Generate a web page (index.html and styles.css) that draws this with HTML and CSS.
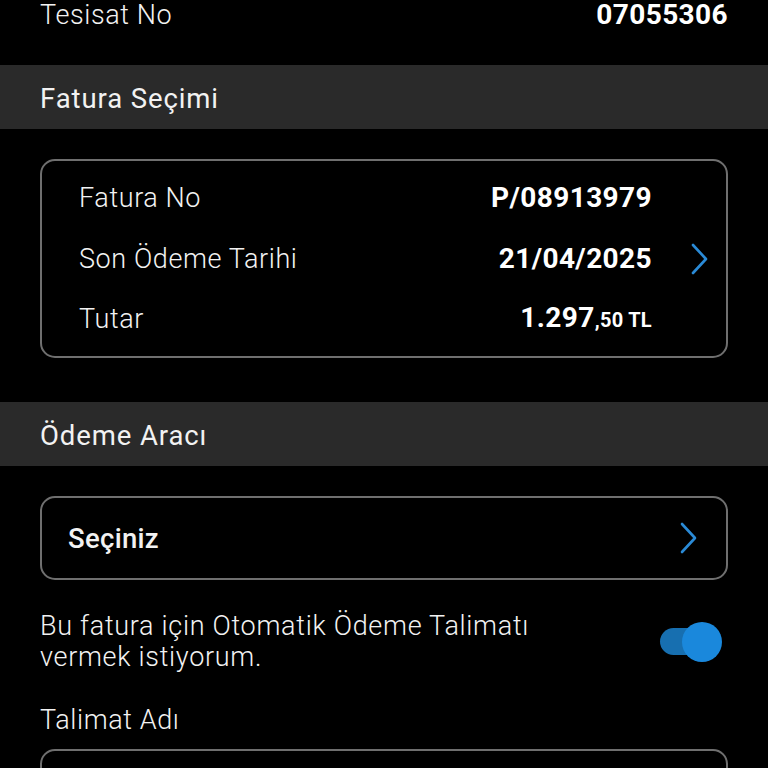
FILE: index.html
```html
<!DOCTYPE html>
<html lang="tr">
<head>
<meta charset="utf-8">
<link rel="stylesheet" href="styles.css">
</head>
<body>
<div class="page">
  <div class="top-row">
    <span class="label">Tesisat No</span>
    <span class="value">07055306</span>
  </div>

  <div class="section-head">Fatura Seçimi</div>

  <div class="card bill">
    <div class="rows">
      <div class="row"><span class="label">Fatura No</span><span class="value">P/08913979</span></div>
      <div class="row"><span class="label">Son Ödeme Tarihi</span><span class="value">21/04/2025</span></div>
      <div class="row"><span class="label">Tutar</span><span class="value">1.297<span class="small">,50 TL</span></span></div>
    </div>
    <div class="chev-col">
      <svg class="chev" viewBox="0 0 18 32" width="18" height="32"><path d="M2 2 L15 16 L2 30" fill="none" stroke="#2a8ad6" stroke-width="2.6" stroke-linecap="round" stroke-linejoin="round"/></svg>
    </div>
  </div>

  <div class="section-head second">Ödeme Aracı</div>

  <div class="card select">
    <span class="select-text">Seçiniz</span>
    <svg class="chev" viewBox="0 0 18 32" width="18" height="32"><path d="M2 2 L15 16 L2 30" fill="none" stroke="#2a8ad6" stroke-width="2.6" stroke-linecap="round" stroke-linejoin="round"/></svg>
  </div>

  <div class="toggle-row">
    <p class="toggle-text">Bu fatura için Otomatik Ödeme Talimatı<br>vermek istiyorum.</p>
    <div class="toggle"><div class="track"></div><div class="thumb"></div></div>
  </div>

  <div class="field-label">Talimat Adı</div>
  <div class="card input"></div>
</div>
</body>
</html>
```

FILE: styles.css
```css
html, body {
  margin: 0;
  padding: 0;
  background: #000;
}
body {
  font-family: Roboto, "Noto Sans", "Liberation Sans", sans-serif;
  color: #f2f2f2;
  width: 768px;
  height: 768px;
  overflow: hidden;
}
.page {
  display: flex;
  flex-direction: column;
}
.label {
  font-weight: 300;
  font-size: 27px;
  letter-spacing: 0.6px;
}
.value {
  font-weight: 700;
  font-size: 28px;
  letter-spacing: 0.4px;
  color: #fff;
}
.top-row {
  display: flex;
  justify-content: space-between;
  align-items: flex-start;
  height: 64px;
  padding: 0 40px;
  line-height: 30px;
  box-sizing: border-box;
}
.section-head {
  height: 64px;
  background: #2a2a2a;
  padding: 2px 40px 0;
  box-sizing: border-box;
  display: flex;
  align-items: center;
  font-size: 27.5px;
  font-weight: 400;
  letter-spacing: 0.9px;
  margin-top: 1px;
}
.section-head.second {
  margin-top: 44px;
}
.card {
  margin: 30px 40px 0;
  border: 2px solid #6f6f6f;
  border-radius: 15px;
}
.bill {
  display: flex;
  height: 199px;
  box-sizing: border-box;
}
.rows {
  flex: 1;
  padding: 7px 0 0 37px;
  display: flex;
  flex-direction: column;
}
.row {
  height: 60.5px;
  display: flex;
  justify-content: space-between;
  align-items: center;
  line-height: 30px;
}
.small {
  font-size: 20px;
  letter-spacing: 0.3px;
}
.chev-col {
  width: 74px;
  display: flex;
  align-items: center;
  padding-left: 39px;
  box-sizing: border-box;
}
.chev {
  display: block;
}
.select {
  height: 84px;
  box-sizing: border-box;
  display: flex;
  align-items: center;
  justify-content: space-between;
  padding: 0 28px 0 26px;
}
.select-text {
  font-size: 27.5px;
  font-weight: 500;
  letter-spacing: 0.3px;
}
.toggle-row {
  display: flex;
  align-items: center;
  justify-content: space-between;
  padding: 0 46px 0 40px;
  margin-top: 31px;
}
.toggle-text {
  margin: 0;
  font-size: 27px;
  font-weight: 300;
  letter-spacing: 0.7px;
  line-height: 31px;
}
.toggle {
  position: relative;
  width: 62px;
  height: 40px;
}
.track {
  position: absolute;
  left: 0;
  top: 6px;
  width: 50px;
  height: 27px;
  border-radius: 14px;
  background: #176fb0;
}
.thumb {
  position: absolute;
  right: 0;
  top: 0;
  width: 40px;
  height: 40px;
  border-radius: 50%;
  background: #1a88dc;
}
.field-label {
  padding: 0 40px;
  margin-top: 32px;
  font-size: 27px;
  font-weight: 300;
  letter-spacing: 0.6px;
  line-height: 30px;
}
.input {
  margin-top: 14px;
  height: 60px;
}
```
